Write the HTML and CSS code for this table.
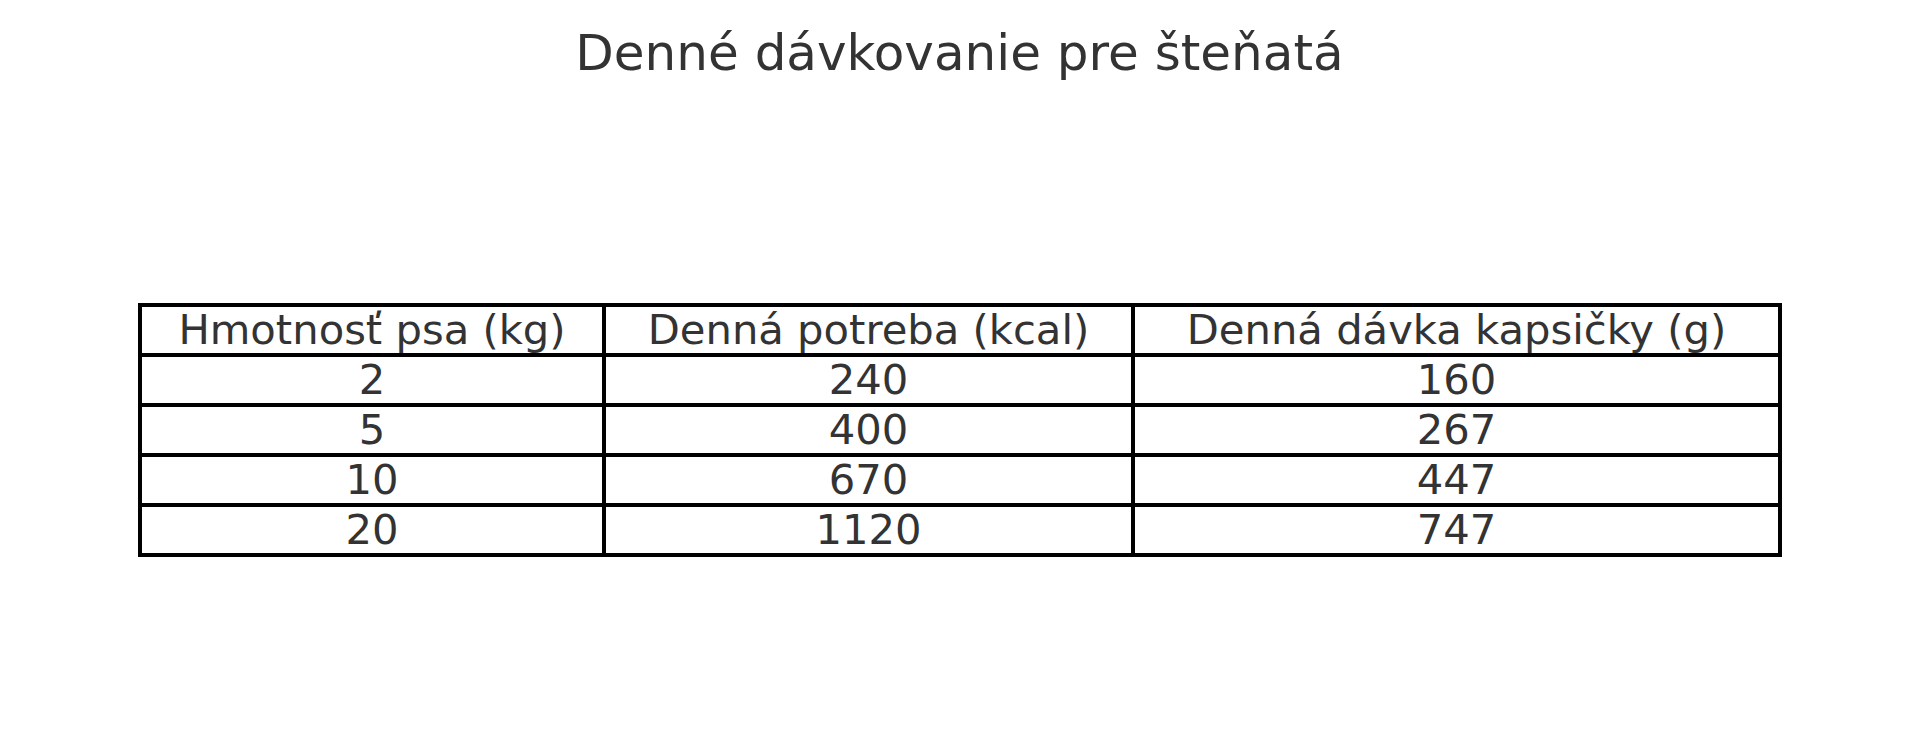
FILE: index.html
```html
<!DOCTYPE html>
<html lang="sk">
<head>
<meta charset="utf-8">
<title>Denné dávkovanie pre šteňatá</title>
<link rel="stylesheet" href="styles.css">
</head>
<body>
<h1 class="title">Denné dávkovanie pre šteňatá</h1>
<table class="dose-table">
  <colgroup>
    <col class="c1">
    <col class="c2">
    <col class="c3">
  </colgroup>
  <tr><td>Hmotnosť psa (kg)</td><td>Denná potreba (kcal)</td><td>Denná dávka kapsičky (g)</td></tr>
  <tr><td>2</td><td>240</td><td>160</td></tr>
  <tr><td>5</td><td>400</td><td>267</td></tr>
  <tr><td>10</td><td>670</td><td>447</td></tr>
  <tr><td>20</td><td>1120</td><td>747</td></tr>
</table>
</body>
</html>
```
FILE: styles.css
```css
html, body {
  margin: 0;
  padding: 0;
  background: #ffffff;
}
body {
  font-family: "DejaVu Sans", "Liberation Sans", sans-serif;
  color: #333333;
  width: 1919px;
}
.title {
  margin: 0;
  padding-top: 24px;
  font-size: 50px;
  font-weight: normal;
  line-height: normal;
  text-align: center;
}
.dose-table {
  margin: 221px 0 0 138px;
  width: 1644px;
  border-collapse: collapse;
  table-layout: fixed;
}
.c1 { width: 464px; }
.c2 { width: 529px; }
.c3 { width: 647px; }
.dose-table td {
  border: 4px solid #000000;
  padding: 0 0 1px 0;
  font-size: 41.7px;
  line-height: 45px;
  height: 45px;
  text-align: center;
  white-space: nowrap;
  color: #333333;
}
```
